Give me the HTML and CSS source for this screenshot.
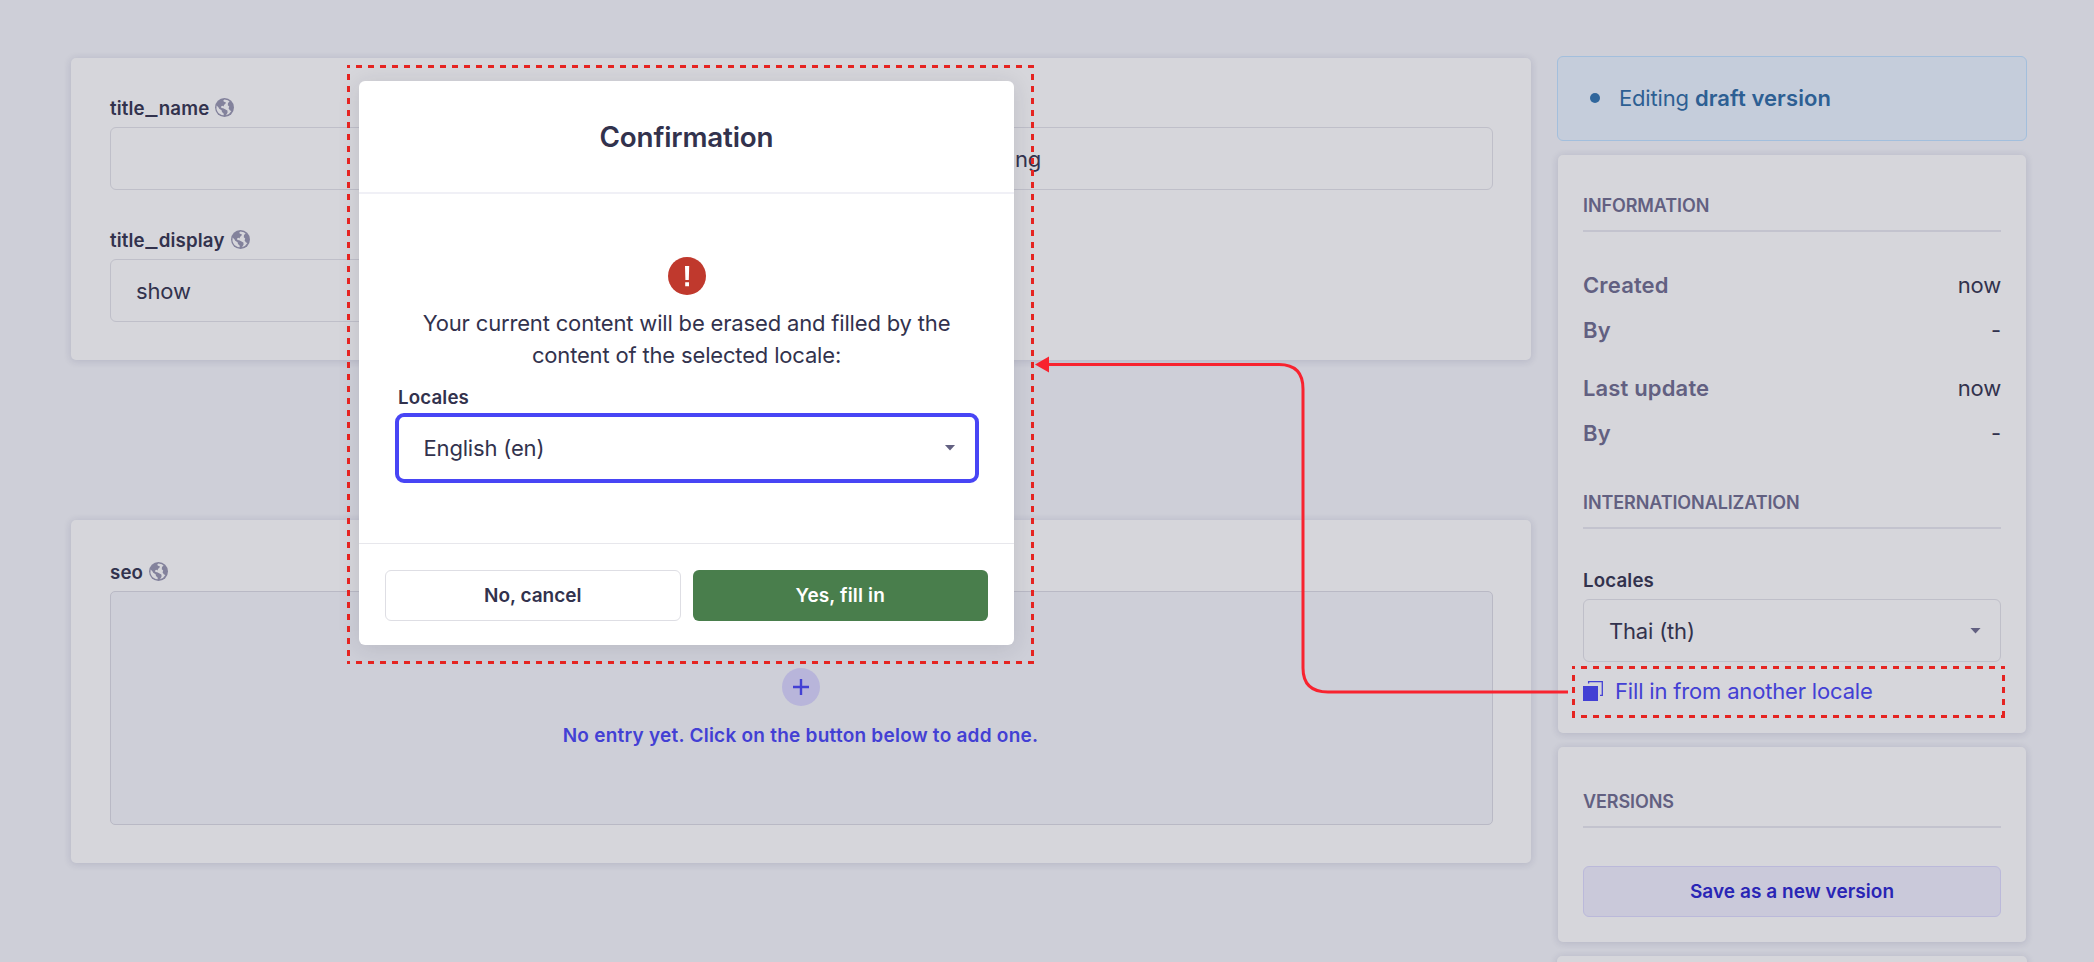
FILE: index.html
```html
<!DOCTYPE html>
<html lang="en">
<head>
<meta charset="utf-8">
<title>Content editor</title>
<link rel="stylesheet" href="styles.css">
</head>
<body>
<svg class="defs" width="0" height="0">
  <symbol id="globe" viewBox="0 0 19 19">
    <circle cx="9.5" cy="9.5" r="9.5" fill="#83829c"/>
    <path d="M1.6 7.4 3.4 9.2 4.2 10.8 6.6 12.2 7 14 8.6 15.4 8.8 17.3Q4.300 17 2.300 13.300 1 10.500 1.600 7.400ZM9.400 1.600 12.800 2.200 14.600 3.400 13 5 12.800 7.200 14.200 8.600 13.600 10.600 15 12.600 16.400 13Q14.600 16.400 11 17.200L12.600 14.400 12.400 12.400 10.600 11.400 8.200 10.200 6.400 10 6 8.400 7.600 7.800 8.600 8.600 9 7 10.600 5.600 10.800 4.200 9 3.800 8.200 2.800Z" fill="#d6d6db"/>
  </symbol>
</svg>
<main class="layout">
  <div class="editor">
    <section class="card fields">
      <div class="field">
        <label class="label"><span>title<span class="underscore">_</span>name</span> <svg class="globe"><use href="#globe"/></svg></label>
        <div class="input"></div>
      </div>
      <div class="field second">
        <label class="label empty"></label>
        <div class="input">ng</div>
      </div>
      <div class="field">
        <label class="label"><span>title<span class="underscore">_</span>display</span> <svg class="globe"><use href="#globe"/></svg></label>
        <div class="input">show</div>
      </div>
    </section>
    <section class="card seo">
      <label class="label">seo <svg class="globe"><use href="#globe"/></svg></label>
      <div class="empty-zone">
        <span class="plus"><svg width="16" height="16" viewBox="0 0 16 16"><path d="M8 0V16M0 8H16" stroke="#4340d4" stroke-width="2.4"/></svg></span>
        <p class="empty-text">No entry yet. Click on the button below to add one.</p>
      </div>
    </section>
  </div>
  <aside class="side">
    <div class="status"><i class="dot"></i><span class="status-text">Editing <b>draft version</b></span></div>
    <section class="card panel info">
      <h2 class="heading">INFORMATION</h2>
      <dl class="meta">
        <div class="row"><dt>Created</dt><dd>now</dd></div>
        <div class="row"><dt>By</dt><dd>-</dd></div>
        <div class="row spaced"><dt>Last update</dt><dd>now</dd></div>
        <div class="row"><dt>By</dt><dd>-</dd></div>
      </dl>
      <h2 class="heading">INTERNATIONALIZATION</h2>
      <label class="label locale-label">Locales</label>
      <div class="input select"><span class="thai">Thai (th)</span><i class="caret"></i></div>
      <div class="fill">
        <svg width="20" height="20" viewBox="0 0 20 20"><path d="M0 5H15V20H0Z" fill="#4340d4"/><path d="M5.6 2.500V.6H19.3V14.4H17" fill="none" stroke="#4340d4" stroke-width="1.3"/></svg>
        <span class="fill-text">Fill in from another locale</span>
        <svg class="outline" width="433" height="52"><path d="M0 1.5H433M0 50.5H433M1.5 0V52M431.5 0V52"/></svg>
      </div>
    </section>
    <section class="card panel versions">
      <h2 class="heading">VERSIONS</h2>
      <button class="save"><span>Save as a new version</span></button>
    </section>
    <section class="card next"></section>
  </aside>
</main>

<div class="modal" role="dialog">
  <header class="modal-head"><span>Confirmation</span></header>
  <div class="modal-body">
    <svg class="alert-icon" width="38" height="38" viewBox="0 0 38 38"><circle cx="19" cy="19" r="19" fill="#c0392d"/><path d="M17 9H21.2L20.8 23H17.4ZM17.2 25.2H21V29.2H17.2Z" fill="#fff"/></svg>
    <p class="message"><span class="line-a">Your current content will be erased and filled by the</span><br><span class="line-b">content of the selected locale:</span></p>
    <label class="label modal-label">Locales</label>
    <div class="modal-select"><span>English (en)</span><i class="caret"></i></div>
  </div>
  <footer class="modal-foot">
    <button class="btn cancel"><span>No, cancel</span></button>
    <button class="btn confirm"><span>Yes, fill in</span></button>
  </footer>
</div>

<svg class="annotations" width="2094" height="962">
  <path class="dashes" d="M347 66.5H1034M347 662.5H1034"/>
  <path class="dashes" d="M348.5 65V664M1032.5 65V664"/>
  <path d="M1568 692H1328Q1303 692 1303 668V389Q1303 364.500 1279 364.500H1047" fill="none" stroke="#f8232f" stroke-width="3"/>
  <path d="M1035 364.500 1049 356.500V372.500Z" fill="#f8232f"/>
</svg>
</body>
</html>
```
FILE: styles.css
```css
* { box-sizing: border-box; }
body {
  margin: 0;
  width: 2094px;
  height: 962px;
  overflow: hidden;
  position: relative;
  background: #cecfd8;
  color: #32324d;
  font-family: Inter, "Liberation Sans", sans-serif;
  font-size: 22px;
  letter-spacing: -.17px;
}
h2, p, dl, dd { margin: 0; }
.defs { position: absolute; }
.layout {
  display: grid;
  grid-template-columns: 1460px 470px;
  gap: 26px;
  padding: 56px 67px 0 71px;
}
.editor { padding-top: 2px; }
.card {
  background: #d6d6db;
  border-radius: 5px;
  box-shadow: 0 1px 7px 1px rgba(33, 33, 80, .12);
}
.fields {
  height: 302px;
  padding: 38px 38px 0 39px;
  display: grid;
  grid-template-columns: 680px 680px;
  grid-template-rows: 94px 133px;
  column-gap: 23px;
  row-gap: 38px;
}
.label {
  display: flex;
  align-items: center;
  gap: 6px;
  height: 24px;
  padding-top: 2px;
  font-size: 18.7px;
  line-height: 24px;
  font-weight: 600;
  letter-spacing: .15px;
  white-space: nowrap;
}
.underscore { display: inline-block; transform: scaleX(1.4); margin: 0 2.5px; }
.globe { width: 19px; height: 19px; margin-top: -3px; }
.input {
  display: flex;
  align-items: center;
  height: 63px;
  margin-top: 7px;
  padding: 0 25px;
  border: 1px solid #bfbfc9;
  border-radius: 6px;
}
.second .input { padding-left: 201px; }
.seo { height: 343px; margin-top: 160px; padding: 40px 38px 0 39px; }
.empty-zone {
  height: 234px;
  margin-top: 7px;
  border: 1px solid #b9b9c5;
  border-radius: 5px;
  background: #cecfd8;
  display: flex;
  flex-direction: column;
  align-items: center;
  padding: 76px 2px 0 0;
}
.plus {
  width: 38px;
  height: 38px;
  border-radius: 50%;
  background: #b8b5da;
  display: grid;
  place-items: center;
}
.empty-text { margin-top: 18px; font-size: 19px; line-height: 24px; font-weight: 600; letter-spacing: .24px; color: #4340d4; white-space: nowrap; }
.side { display: flex; flex-direction: column; }
.status {
  height: 85px;
  display: flex;
  align-items: center;
  padding: 0 0 1px 32px;
  gap: 20px;
  border: 1px solid #a3bfdd;
  border-radius: 6px;
  background: #c5cddb;
  color: #2d5f93;
}
.status b { font-weight: 600; letter-spacing: .1px; }
.status-text { margin-left: -1px; }
.dot { width: 10px; height: 10px; border-radius: 50%; background: #30669c; }
.panel { margin: 14px 1px 0; padding: 0 25px; }
.info { height: 578px; padding-top: 37px; }
.heading {
  height: 40px;
  border-bottom: 2px solid #c3c3ce;
  font-size: 18px;
  line-height: 28px;
  font-weight: 600;
  letter-spacing: -.1px;
  color: #626081;
}
.meta { padding: 34px 0 30px; }
.row { display: flex; justify-content: space-between; height: 38px; line-height: 38px; margin-bottom: 7px; }
.row.spaced { margin-top: 20px; }
.row dt { font-weight: 600; letter-spacing: .15px; color: #626081; }
.info .heading + .label { margin-top: 39px; }
.select { justify-content: space-between; padding-right: 19px; }
.caret { width: 11px; height: 6px; background: #626081; clip-path: polygon(0 0, 100% 0, 50% 100%); }
.fill { position: relative; display: flex; align-items: center; gap: 12px; height: 52px; margin-top: 4px; padding-bottom: 2px; color: #4340d4; }
.outline { position: absolute; left: -11px; top: 0; }
.outline path, .dashes { fill: none; stroke: #e52421; stroke-width: 3; stroke-dasharray: 6 6; stroke-dashoffset: 3; }
.versions { height: 195px; padding-top: 41px; }
.save {
  display: block;
  width: 100%;
  height: 51px;
  margin-top: 38px;
  border: 1px solid #bbb9da;
  border-radius: 6px;
  background: #cac9da;
  color: #2925b5;
  font: 600 19px Inter, sans-serif;
  letter-spacing: .05px;
}
.next { height: 40px; margin-top: 14px; }
.modal {
  position: absolute;
  left: 359px;
  top: 81px;
  width: 655px;
  height: 564px;
  background: #fff;
  border-radius: 6px;
  box-shadow: 0 3px 22px rgba(33, 33, 52, .12);
}
.modal-head {
  height: 113px;
  border-bottom: 2px solid #f0f0f6;
  display: grid;
  place-items: center;
  font-size: 27.8px;
  font-weight: 600;
}
.modal-body { height: 349px; padding: 63px 36px 0; display: flex; flex-direction: column; align-items: center; }
.alert-icon { flex: none; }
.message { margin-top: 12px; text-align: center; line-height: 32px; white-space: nowrap; }
.modal-label { align-self: flex-start; margin: 14px 0 0 3px; }
.modal-select {
  width: 584px;
  height: 70px;
  margin-top: 4px;
  border: 4px solid #4845f5;
  border-radius: 9px;
  display: flex;
  align-items: center;
  justify-content: space-between;
  padding: 0 19px 1px 25px;
}
.modal-foot { display: flex; gap: 12px; padding: 26px; border-top: 1px solid #e7e7ec; }
.btn { width: 296px; height: 51px; border-radius: 6px; font: 600 19px Inter, sans-serif; }
.cancel { background: #fff; border: 1px solid #dedee4; color: #32324d; }
.confirm { background: #497e4c; border: 0; color: #fff; letter-spacing: .15px; }
.annotations { position: absolute; left: 0; top: 0; pointer-events: none; }
```
